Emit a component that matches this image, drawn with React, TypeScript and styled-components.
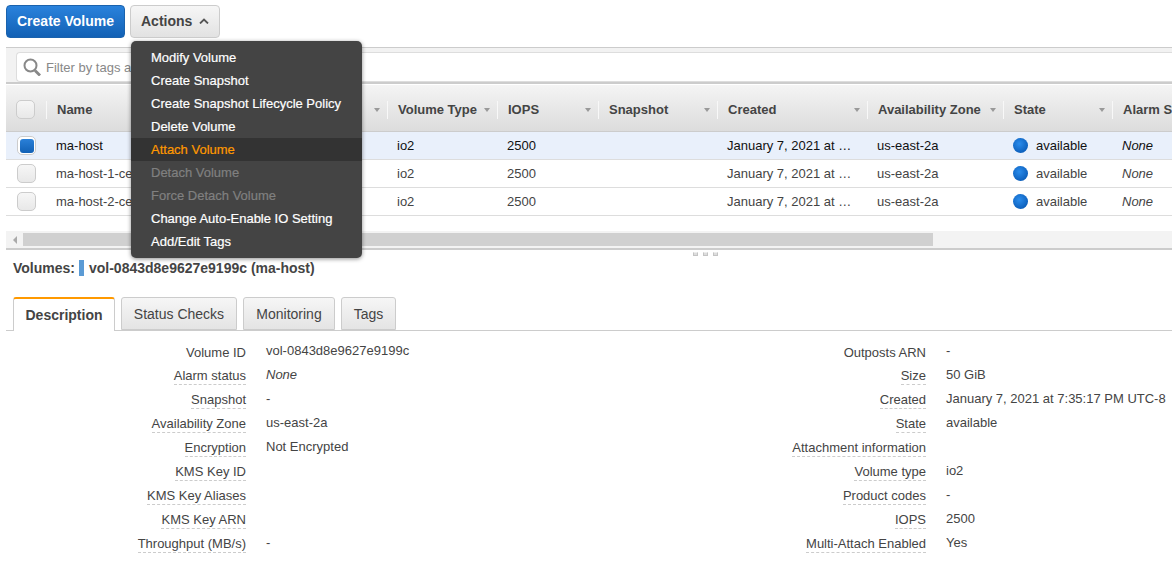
import React from 'react';
import styled, { createGlobalStyle } from 'styled-components';

const GlobalStyle = createGlobalStyle`
  html, body {
    margin: 0;
    padding: 0;
    background: #fff;
  }
  body {
    font-family: "Liberation Sans", Arial, sans-serif;
    font-size: 13px;
    color: #444;
  }
`;

const COLUMNS = '40px 341px 110px 101px 119px 150px 136px 109px 200px';

const Page = styled.div`
  position: relative;
  width: 1172px;
  height: 570px;
  overflow: hidden;
  padding-top: 5px;
  box-sizing: border-box;
`;

const Toolbar = styled.div`
  display: flex;
  gap: 5px;
  height: 33px;
  padding-left: 6px;
  margin-bottom: 9px;
`;

const PrimaryButton = styled.button`
  width: 119px;
  height: 33px;
  padding: 0 0 2px;
  border: 1px solid #1a62ad;
  border-radius: 4px;
  background: linear-gradient(#2a82dc, #1261b5);
  color: #fff;
  font: bold 14px "Liberation Sans", Arial, sans-serif;
`;

const ActionsButton = styled.button`
  display: flex;
  align-items: center;
  gap: 7px;
  width: 90px;
  height: 33px;
  padding: 0 0 2px 10px;
  border: 1px solid #ccc;
  border-radius: 4px;
  background: linear-gradient(#f6f6f6, #e2e2e2);
  color: #444;
  font: bold 14px "Liberation Sans", Arial, sans-serif;
`;

const Menu = styled.ul`
  position: absolute;
  left: 131px;
  top: 41px;
  width: 231px;
  margin: 0;
  padding: 5px 0;
  list-style: none;
  background: #444;
  border-radius: 5px;
  box-shadow: 0 1px 4px rgba(0, 0, 0, 0.45);
`;

const MenuItem = styled.li<{ $active?: boolean; $disabled?: boolean }>`
  height: 23px;
  line-height: 23px;
  padding-left: 20px;
  font-size: 13px;
  -webkit-text-stroke: 0.2px currentColor;
  color: ${(props) => (props.$active ? '#f90' : props.$disabled ? '#808080' : '#fff')};
  background: ${(props) => (props.$active ? '#333' : 'transparent')};
`;

const FilterBar = styled.div`
  margin-left: 6px;
  height: 30px;
  padding: 4px 0 0 10px;
  background: #f2f2f2;
  border-top: 1px solid #ccc;
  border-bottom: 2px solid #ccc;
`;

const FilterInput = styled.div`
  display: flex;
  align-items: center;
  gap: 5px;
  height: 30px;
  padding-left: 6px;
  box-sizing: border-box;
  background: #fff;
  border: 1px solid #ddd;
  border-right: 0;
  border-radius: 4px 0 0 4px;
  color: #888;
`;

const Table = styled.div`
  margin-left: 6px;
  height: 147px;
`;

const HeaderRow = styled.div`
  display: grid;
  grid-template-columns: ${COLUMNS};
  height: 48px;
  padding-top: 3px;
  box-sizing: border-box;
  background: linear-gradient(#f4f4f4, #dcdcdc);
  border-top: 1px solid #fff;
  border-bottom: 1px solid #ccc;
`;

const HeaderCell = styled.div`
  display: flex;
  align-items: center;
`;

const HeaderInner = styled.div`
  flex: 1;
  display: flex;
  align-items: center;
  justify-content: space-between;
  height: 18px;
  padding: 0 7px 0 10px;
  border-left: 1px solid #f8f8f8;
  font-weight: bold;
  white-space: nowrap;
  overflow: hidden;
`;

const CheckHeader = styled(HeaderCell)`
  padding-left: 10px;
`;

const SortArrow = styled.span`
  flex: none;
  width: 0;
  height: 0;
  border-left: 3.5px solid transparent;
  border-right: 3.5px solid transparent;
  border-top: 4px solid #999;
`;

const Row = styled.div<{ $selected?: boolean }>`
  display: grid;
  grid-template-columns: ${COLUMNS};
  height: 28px;
  box-sizing: border-box;
  border-bottom: 1px solid #ddd;
  background: ${(props) => (props.$selected ? '#e9f0fb' : '#fff')};
  color: ${(props) => (props.$selected ? '#111' : '#444')};
`;

const Cell = styled.div<{ $italic?: boolean }>`
  display: flex;
  align-items: center;
  padding-left: 10px;
  min-width: 0;
  white-space: nowrap;
  font-style: ${(props) => (props.$italic ? 'italic' : 'normal')};
`;

const CheckCell = styled.div`
  display: flex;
  align-items: center;
  padding-left: 11px;
`;

const Checkbox = styled.span<{ $checked?: boolean }>`
  display: flex;
  align-items: center;
  justify-content: center;
  width: 19px;
  height: 19px;
  box-sizing: border-box;
  border: 1px solid #ccc;
  border-radius: 5px;
  background: ${(props) => (props.$checked ? '#fff' : 'linear-gradient(#f6f6f6, #e8e8e8)')};
`;

const CheckMark = styled.span`
  width: 14px;
  height: 14px;
  border-radius: 3px;
  background: linear-gradient(#2a80d8, #1261b5);
`;

const StateDot = styled.span`
  flex: none;
  width: 15px;
  height: 15px;
  margin-right: 8px;
  border-radius: 50%;
  background: radial-gradient(circle at 42% 38%, #2a8cec, #0a5cb8 78%);
`;

const ScrollBar = styled.div`
  display: flex;
  align-items: center;
  margin-left: 6px;
  height: 17px;
  background: #f3f3f3;
`;

const ScrollArrow = styled.span`
  width: 0;
  height: 0;
  margin: 0 6px 0 7px;
  border-top: 4px solid transparent;
  border-bottom: 4px solid transparent;
  border-right: 4px solid #aaa;
`;

const ScrollThumb = styled.div`
  width: 910px;
  height: 13px;
  background: #d0d0d0;
`;

const Splitter = styled.div`
  display: flex;
  align-items: center;
  gap: 5px;
  margin-left: 6px;
  height: 10px;
  padding-left: 687px;
  box-sizing: border-box;
  border-top: 2px solid #ccc;
`;

const SplitDot = styled.span`
  width: 5px;
  height: 4px;
  box-sizing: border-box;
  border: 1px solid #c4c4c4;
  border-top-color: #eee;
  background: #ddd;
`;

const VolumeTitle = styled.div`
  display: flex;
  align-items: center;
  height: 20px;
  padding-left: 13px;
  font-size: 14px;
  font-weight: bold;
  white-space: nowrap;
`;

const TitleMark = styled.span`
  width: 5px;
  height: 16px;
  margin: 0 5px 0 4px;
  background: #5b9bd5;
`;

const TabBar = styled.div`
  display: flex;
  align-items: flex-end;
  gap: 6px;
  height: 34px;
  margin: 19px 0 0 6px;
  padding-left: 7px;
  box-sizing: border-box;
  border-bottom: 1px solid #ccc;
`;

const Tab = styled.div<{ $active?: boolean; $width: number }>`
  display: flex;
  align-items: center;
  justify-content: center;
  box-sizing: border-box;
  width: ${(props) => props.$width}px;
  height: ${(props) => (props.$active ? 34 : 33)}px;
  margin-bottom: ${(props) => (props.$active ? -1 : 0)}px;
  border: 1px solid #ccc;
  border-bottom: ${(props) => (props.$active ? '0' : '1px solid #ccc')};
  border-top: ${(props) => (props.$active ? '2px solid #f90' : '1px solid #ccc')};
  border-radius: 3px 3px 0 0;
  background: ${(props) => (props.$active ? '#fff' : 'linear-gradient(#f6f6f6, #e4e4e4)')};
  font-size: 14px;
  font-weight: ${(props) => (props.$active ? 'bold' : 'normal')};
`;

const Details = styled.div`
  display: grid;
  grid-template-columns: 680px 1fr;
  padding-top: 10px;
`;

const DetailRow = styled.div`
  display: grid;
  grid-template-columns: 246px 1fr;
  column-gap: 20px;
  height: 24px;
`;

const DetailLabel = styled.div`
  justify-self: end;
  align-self: start;
  height: 19px;
  line-height: 23px;
`;

const DashedLabel = styled(DetailLabel)`
  line-height: 22px;
  border-bottom: 1px dashed #ccc;
`;

const DetailValue = styled.div<{ $italic?: boolean }>`
  line-height: 20px;
  white-space: nowrap;
  font-style: ${(props) => (props.$italic ? 'italic' : 'normal')};
`;

const menuItems = [
  { label: 'Modify Volume' },
  { label: 'Create Snapshot' },
  { label: 'Create Snapshot Lifecycle Policy' },
  { label: 'Delete Volume' },
  { label: 'Attach Volume', active: true },
  { label: 'Detach Volume', disabled: true },
  { label: 'Force Detach Volume', disabled: true },
  { label: 'Change Auto-Enable IO Setting' },
  { label: 'Add/Edit Tags' },
];

const headers = ['Name', 'Volume Type', 'IOPS', 'Snapshot', 'Created', 'Availability Zone', 'State', 'Alarm Status'];

const volumes = [
  { name: 'ma-host', selected: true },
  { name: 'ma-host-1-ce' },
  { name: 'ma-host-2-ce' },
];

const leftDetails = [
  ['Volume ID', 'vol-0843d8e9627e9199c'],
  ['Alarm status', 'None'],
  ['Snapshot', '-'],
  ['Availability Zone', 'us-east-2a'],
  ['Encryption', 'Not Encrypted'],
  ['KMS Key ID', ''],
  ['KMS Key Aliases', ''],
  ['KMS Key ARN', ''],
  ['Throughput (MB/s)', '-'],
];

const rightDetails = [
  ['Outposts ARN', '-'],
  ['Size', '50 GiB'],
  ['Created', 'January 7, 2021 at 7:35:17 PM UTC-8'],
  ['State', 'available'],
  ['Attachment information', ''],
  ['Volume type', 'io2'],
  ['Product codes', '-'],
  ['IOPS', '2500'],
  ['Multi-Attach Enabled', 'Yes'],
];

const SearchIcon = () => (
  <svg width="18" height="18" viewBox="0 0 18 18" fill="none" stroke="#888" strokeWidth="2">
    <circle cx="7.5" cy="7.5" r="6" />
    <path d="M12 12.5l5 5" strokeWidth="2.8" />
  </svg>
);

const DetailColumn = ({ rows }: { rows: string[][] }) => (
  <div>
    {rows.map(([label, value], i) => {
      const Label = i === 0 ? DetailLabel : DashedLabel;
      return (
        <DetailRow key={label}>
          <Label>{label}</Label>
          <DetailValue $italic={value === 'None'}>{value}</DetailValue>
        </DetailRow>
      );
    })}
  </div>
);

export default function App() {
  return (
    <Page>
      <GlobalStyle />
      <Toolbar>
        <PrimaryButton>Create Volume</PrimaryButton>
        <ActionsButton>
          Actions
          <svg width="10" height="6" viewBox="0 0 10 6" fill="none" stroke="#555" strokeWidth="1.8">
            <path d="M1 5.5l4-4 4 4" />
          </svg>
        </ActionsButton>
      </Toolbar>

      <FilterBar>
        <FilterInput>
          <SearchIcon />
          Filter by tags and attributes
        </FilterInput>
      </FilterBar>

      <Table>
        <HeaderRow>
          <CheckHeader>
            <Checkbox />
          </CheckHeader>
          {headers.map((header, i) => (
            <HeaderCell key={header}>
              <HeaderInner>
                {header}
                {i < headers.length - 1 && <SortArrow />}
              </HeaderInner>
            </HeaderCell>
          ))}
        </HeaderRow>
        {volumes.map((volume) => (
          <Row key={volume.name} $selected={volume.selected}>
            <CheckCell>
              <Checkbox $checked={volume.selected}>{volume.selected && <CheckMark />}</Checkbox>
            </CheckCell>
            <Cell>{volume.name}</Cell>
            <Cell>io2</Cell>
            <Cell>2500</Cell>
            <Cell />
            <Cell>January 7, 2021 at …</Cell>
            <Cell>us-east-2a</Cell>
            <Cell>
              <StateDot />
              available
            </Cell>
            <Cell $italic>None</Cell>
          </Row>
        ))}
      </Table>

      <ScrollBar>
        <ScrollArrow />
        <ScrollThumb />
      </ScrollBar>
      <Splitter>
        <SplitDot />
        <SplitDot />
        <SplitDot />
      </Splitter>

      <VolumeTitle>
        Volumes:
        <TitleMark />
        vol-0843d8e9627e9199c (ma-host)
      </VolumeTitle>

      <TabBar>
        <Tab $active $width={102}>Description</Tab>
        <Tab $width={116}>Status Checks</Tab>
        <Tab $width={92}>Monitoring</Tab>
        <Tab $width={55}>Tags</Tab>
      </TabBar>

      <Details>
        <DetailColumn rows={leftDetails} />
        <DetailColumn rows={rightDetails} />
      </Details>

      <Menu>
        {menuItems.map((item) => (
          <MenuItem key={item.label} $active={item.active} $disabled={item.disabled}>
            {item.label}
          </MenuItem>
        ))}
      </Menu>
    </Page>
  );
}
